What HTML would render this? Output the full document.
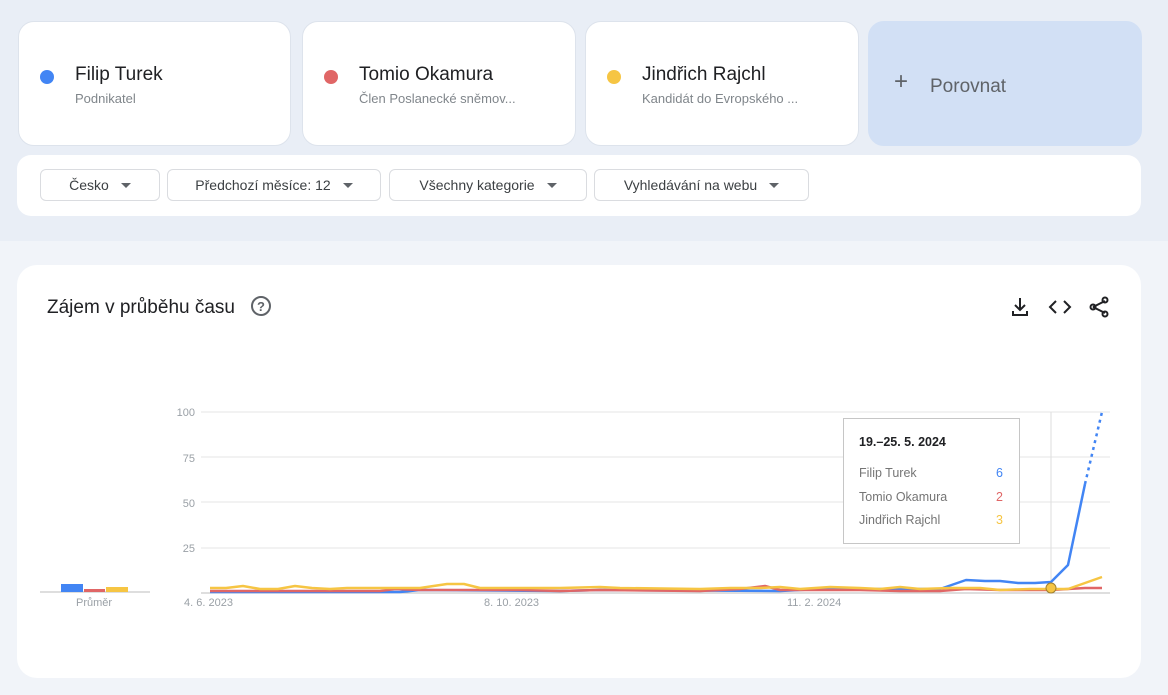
<!DOCTYPE html>
<html><head><meta charset="utf-8"><style>
body{margin:0;width:1168px;height:695px;background:#f1f4f9;font-family:"Liberation Sans",sans-serif;position:relative;overflow:hidden}
.top{position:absolute;left:0;top:0;width:1168px;height:241px;background:#e9eef6}
.card{position:absolute;top:21px;height:125px;background:#fff;border:1px solid #dde3ec;border-radius:16px;box-sizing:border-box}
.dot{position:absolute;left:21px;top:48px;width:14px;height:14px;border-radius:50%}
.nm{position:absolute;left:56px;top:42px;font-size:19px;color:#202124}
.sub{position:absolute;left:56px;top:69px;font-size:13px;color:#80868b}
.bar{position:absolute;left:17px;top:155px;width:1124px;height:61px;background:#fff;border-radius:14px}
.f{position:absolute;top:14px;height:32px;border:1px solid #dadce0;border-radius:6px;box-sizing:border-box;font-size:14px;color:#3c4043;line-height:30px;text-align:center}
.f:after{content:"";display:inline-block;margin-left:12px;border:5px solid transparent;border-top:5px solid #5f6368;vertical-align:-3px}
.main{position:absolute;left:17px;top:265px;width:1124px;height:413px;background:#fff;border-radius:20px}
</style></head><body>
<div class="top"></div>
<div class="card" style="left:18px;width:273px"><div class="dot" style="background:#4285f4"></div><div class="nm">Filip Turek</div><div class="sub">Podnikatel</div></div>
<div class="card" style="left:302px;width:274px"><div class="dot" style="background:#e06666"></div><div class="nm">Tomio Okamura</div><div class="sub">Člen Poslanecké sněmov...</div></div>
<div class="card" style="left:585px;width:274px"><div class="dot" style="background:#f6c543"></div><div class="nm">Jindřich Rajchl</div><div class="sub">Kandidát do Evropského ...</div></div>
<div class="card" style="left:868px;width:274px;background:#d2e0f5;border-color:#d2e0f5"><div style="position:absolute;left:25px;top:50px;font-size:24px;color:#5f6368;line-height:20px">+</div><div style="position:absolute;left:61px;top:54px;font-size:19px;color:#5f6368">Porovnat</div></div>
<div class="bar">
<div class="f" style="left:23px;width:120px">Česko</div>
<div class="f" style="left:150px;width:214px">Předchozí měsíce: 12</div>
<div class="f" style="left:372px;width:198px">Všechny kategorie</div>
<div class="f" style="left:577px;width:215px">Vyhledávání na webu</div>
</div>
<div class="main">
<div style="position:absolute;left:30px;top:32px;font-size:19px;color:#202124">Zájem v průběhu času</div>
<svg style="position:absolute;left:233px;top:30px" width="22" height="22" viewBox="0 0 22 22"><circle cx="11" cy="11" r="9" fill="none" stroke="#5f6368" stroke-width="2"/><text x="11" y="16" font-size="13" font-weight="bold" text-anchor="middle" fill="#5f6368" font-family="Liberation Sans">?</text></svg>
<svg style="position:absolute;left:992px;top:30px" width="110" height="24" viewBox="0 0 110 24">
<g stroke="#202124" stroke-width="2" fill="none"><path d="M11 3v12M6 10l5 5 5-5M4 16v4h14v-4"/><path d="M47 6l-6 6 6 6M55 6l6 6-6 6"/><path d="M84 12l12-6M84 12l12 6"/><circle cx="84" cy="12" r="2.5"/><circle cx="96" cy="5" r="2.5"/><circle cx="96" cy="19" r="2.5"/></g></svg>
</div>
<svg style="position:absolute;left:0;top:0" width="1168" height="695">
<g font-family="Liberation Sans" font-size="11" fill="#9aa0a6">
<text x="195" y="416" text-anchor="end">100</text><text x="195" y="462" text-anchor="end">75</text><text x="195" y="507" text-anchor="end">50</text><text x="195" y="552" text-anchor="end">25</text>
<text x="184" y="606">4. 6. 2023</text><text x="484" y="606">8. 10. 2023</text><text x="787" y="606">11. 2. 2024</text><text x="76" y="606">Průměr</text></g>
<g stroke="#e5e5e5" stroke-width="1"><path d="M201 412H1110M201 457H1110M201 502H1110M201 548H1110"/></g>
<path d="M201 593H1110M40 592H150" stroke="#bdbdbd"/>
<path d="M1051 412V593" stroke="#ddd"/>
<rect x="61" y="584" width="22" height="8" fill="#4285f4"/><rect x="84" y="589" width="21" height="3" fill="#e06666"/><rect x="106" y="587" width="22" height="5" fill="#f6c543"/>
<g fill="none" stroke-width="2.5" stroke-linejoin="round">
<polyline stroke="#4285f4" points="210,592 400,592 420,590 560,591 600,590 780,591 820,589 940,589 966,580 985,581 1000,581 1018,583 1035,583 1051,582 1068,565 1085,484"/>
<path d="M1085 484L1102 412" stroke="#4285f4" stroke-dasharray="3 4"/>
<polyline stroke="#e06666" points="210,591 380,591 395,589 420,590 470,590 520,590 560,591 600,590 700,591 740,589 765,586 780,590 860,590 900,591 940,591 966,589 1000,590 1030,590 1051,590 1085,588 1102,588"/>
<polyline stroke="#f6c543" points="210,588 226,588 243,586 260,589 278,589 295,586 312,588 330,589 347,588 400,588 420,588 447,584 464,584 480,588 560,588 600,587 620,588 700,589 730,588 760,588 780,587 800,589 830,587 860,588 880,589 900,587 920,589 950,588 980,588 1000,590 1030,589 1051,589 1068,589 1085,583 1102,577"/>
</g>
<circle cx="1051" cy="588" r="5" fill="#f6c543" stroke="#a08030" stroke-width="1"/>
<rect x="843.5" y="418.5" width="176" height="125" fill="#fff" stroke="#c6c6c6"/>
<g font-family="Liberation Sans" font-size="12.5">
<text x="859" y="446" fill="#202124" font-weight="bold">19.–25. 5. 2024</text>
<text x="859" y="477" fill="#757575">Filip Turek</text><text x="1003" y="477" fill="#4285f4" text-anchor="end">6</text>
<text x="859" y="501" fill="#757575">Tomio Okamura</text><text x="1003" y="501" fill="#e06666" text-anchor="end">2</text>
<text x="859" y="524" fill="#757575">Jindřich Rajchl</text><text x="1003" y="524" fill="#f6c543" text-anchor="end">3</text>
</g>
</svg>
</body></html>
